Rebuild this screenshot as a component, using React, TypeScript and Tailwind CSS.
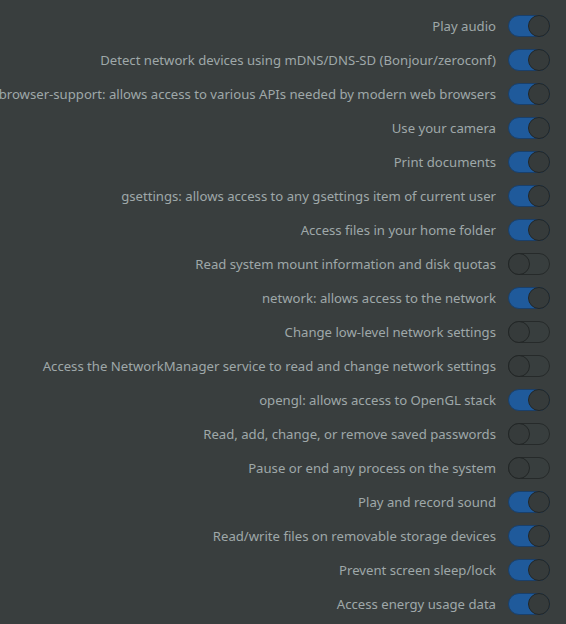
import React from "react";

const rows: [string, boolean][] = [
  ["Play audio", true],
  ["Detect network devices using mDNS/DNS-SD (Bonjour/zeroconf)", true],
  ["browser-support: allows access to various APIs needed by modern web browsers", true],
  ["Use your camera", true],
  ["Print documents", true],
  ["gsettings: allows access to any gsettings item of current user", true],
  ["Access files in your home folder", true],
  ["Read system mount information and disk quotas", false],
  ["network: allows access to the network", true],
  ["Change low-level network settings", false],
  ["Access the NetworkManager service to read and change network settings", false],
  ["opengl: allows access to OpenGL stack", true],
  ["Read, add, change, or remove saved passwords", false],
  ["Pause or end any process on the system", false],
  ["Play and record sound", true],
  ["Read/write files on removable storage devices", true],
  ["Prevent screen sleep/lock", true],
  ["Access energy usage data", true],
];

function Toggle({ on }: { on: boolean }) {
  return (
    <div
      className={`relative w-[42px] h-[22px] shrink-0 rounded-full border ${
        on ? "bg-[#1f5a9b] border-[#1a406b]" : "bg-[#383e3e] border-[#262a2a]"
      }`}
    >
      <div
        className={`absolute top-[-1px] w-[22px] h-[22px] rounded-full bg-[#363b3b] border border-[#222626] ${
          on ? "right-[-1px]" : "left-[-1px]"
        }`}
      />
    </div>
  );
}

export default function App() {
  return (
    <div
      className="w-[566px] h-[624px] overflow-hidden bg-[#393e3e] pt-[9px]"
      style={{ fontFamily: '"Noto Sans", "Open Sans", sans-serif' }}
    >
      {rows.map(([label, on], i) => (
        <div key={i} className="h-[34px] flex items-center justify-end pr-[16px] gap-[12px]">
          <span className="whitespace-nowrap text-[13.15px] leading-[18px] text-[#9fa8a9] -mt-[1px]">{label}</span>
          <Toggle on={on} />
        </div>
      ))}
    </div>
  );
}
